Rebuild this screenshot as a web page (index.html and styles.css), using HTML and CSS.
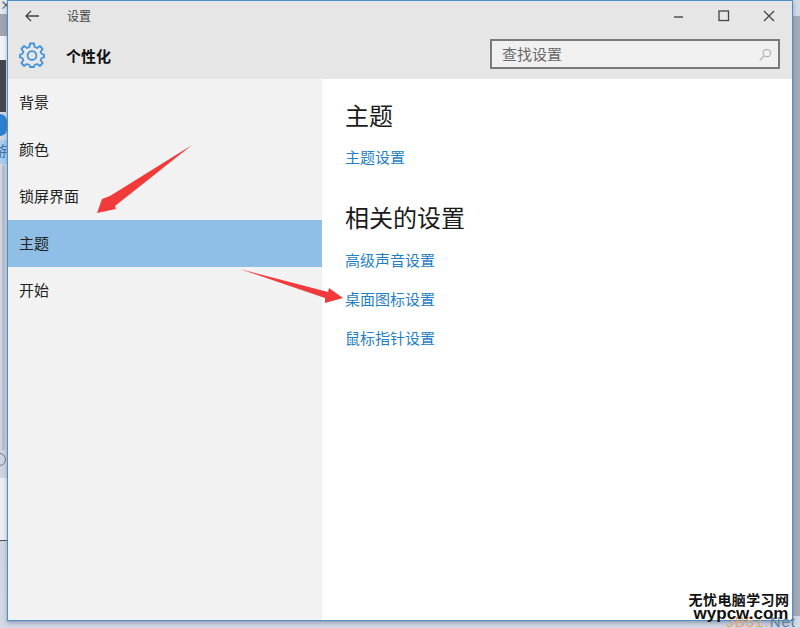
FILE: index.html
```html
<!DOCTYPE html>
<html lang="zh-CN">
<head>
    <meta charset="UTF-8">
    <title>设置</title>
    <link rel="stylesheet" href="styles.css">
</head>
<body>
    <div class="desktop">
        <!-- bits of the desktop showing behind the window -->
        <div class="peek peek-close">×</div>
        <div class="peek peek-bar"></div>
        <div class="peek peek-light"></div>
        <div class="peek peek-dark"></div>
        <div class="peek peek-blue"></div>
        <div class="peek peek-label"><span>游</span></div>
        <div class="peek peek-stripe"></div>
        <div class="peek peek-panel"></div>
        <div class="peek peek-ring"></div>
        <div class="peek peek-line"></div>
        <div class="peek peek-right"></div>

        <div class="window">
            <div class="titlebar">
                <svg class="back-icon" width="14" height="12" viewBox="0 0 14 12">
                    <path d="M6 1 L1 6 L6 11 M1 6 H14" fill="none" stroke="#444" stroke-width="1.3"/>
                </svg>
                <span class="title">设置</span>
                <div class="window-btns">
                    <svg width="12" height="12" viewBox="0 0 12 12"><path d="M1 7 H10" stroke="#444" stroke-width="1.4"/></svg>
                    <svg width="12" height="12" viewBox="0 0 12 12"><rect x="1" y="1" width="9.5" height="9.5" fill="none" stroke="#444" stroke-width="1.3"/></svg>
                    <svg width="12" height="12" viewBox="0 0 12 12"><path d="M1 1 L11 11 M11 1 L1 11" stroke="#444" stroke-width="1.3"/></svg>
                </div>
            </div>
            <div class="header">
                <svg class="gear-icon" width="26" height="26" viewBox="0 0 26 26">
                    <path d="M11 1.5 H15 L15.6 5 L18 6 L20.9 4 L23.7 6.8 L21.7 9.7 L22.7 12 L25 12.6 V15.4 L22.7 16 L21.7 18.3 L23.7 21.2 L20.9 24 L18 22 L15.6 23 L15 25 H11 L10.4 23 L8 22 L5.1 24 L2.3 21.2 L4.3 18.3 L3.3 16 L1 15.4 V12.6 L3.3 12 L4.3 9.7 L2.3 6.8 L5.1 4 L8 6 L10.4 5 Z" fill="none" stroke="#4294d8" stroke-width="1.8" stroke-linejoin="round"/>
                    <circle cx="13" cy="13.5" r="4.4" fill="none" stroke="#4294d8" stroke-width="1.8"/>
                </svg>
                <span class="section-name">个性化</span>
                <div class="search">
                    <span class="search-text">查找设置</span>
                    <svg width="13" height="13" viewBox="0 0 14 14">
                        <circle cx="8.5" cy="5.5" r="4" fill="none" stroke="#aaa" stroke-width="1.1"/>
                        <path d="M5.5 8.5 L1 13" stroke="#aaa" stroke-width="1.2"/>
                    </svg>
                </div>
            </div>
            <div class="main">
                <div class="sidebar">
                    <div class="nav-item">背景</div>
                    <div class="nav-item">颜色</div>
                    <div class="nav-item">锁屏界面</div>
                    <div class="nav-item active">主题</div>
                    <div class="nav-item">开始</div>
                </div>
                <div class="content">
                    <h2 class="first">主题</h2>
                    <a class="link">主题设置</a>
                    <h2 class="second">相关的设置</h2>
                    <a class="link">高级声音设置</a>
                    <a class="link">桌面图标设置</a>
                    <a class="link">鼠标指针设置</a>
                </div>
            </div>
        </div>

        <!-- red annotation arrows -->
        <svg class="arrows" width="800" height="628" viewBox="0 0 800 628">
            <polygon points="192,145 110,196 102,199 97,213 116,209 115,206" fill="#f23a3a"/>
            <polygon points="240,269 328,292 329,288 343,298 325,303 325,298" fill="#f23a3a"/>
        </svg>

        <div class="watermark">
            <div class="wm-back">JB51.<span>Net</span></div>
            <div class="wm-cn">无忧电脑学习网</div>
            <div class="wm-en">wypcw.com</div>
        </div>
    </div>
</body>
</html>
```

FILE: styles.css
```css
html, body {
    margin: 0;
    padding: 0;
}
body {
    width: 800px;
    height: 628px;
    overflow: hidden;
    font-family: "Noto Sans CJK SC", "Liberation Sans", sans-serif;
}
.desktop {
    position: relative;
    width: 800px;
    height: 628px;
    background: linear-gradient(#d4d9e4, #cdd3e0 70%, #d3d9e6);
    padding: 0 0 0 7px;
    box-sizing: border-box;
    overflow: hidden;
}
.peek {
    position: absolute;
}
.peek-close {
    left: 0;
    top: 0;
    width: 7px;
    height: 14px;
    overflow: hidden;
    font-size: 12px;
    line-height: 10px;
    color: #444;
    background: #e4e8f0;
}
.peek-bar {
    left: 0;
    top: 14px;
    width: 7px;
    height: 22px;
    background: #a3a5b3;
}
.peek-light {
    left: 0;
    top: 36px;
    width: 7px;
    height: 24px;
    background: #f2f3f6;
}
.peek-dark {
    left: 0;
    top: 60px;
    width: 6px;
    height: 52px;
    background: #45454f;
}
.peek-blue {
    left: 0;
    top: 114px;
    width: 7px;
    height: 22px;
    border-radius: 0 10px 10px 0;
    background: #2f7fd0;
}
.peek-label {
    left: 0;
    top: 140px;
    width: 7px;
    height: 24px;
    overflow: hidden;
    background: #a9cdf0;
    font-size: 14px;
    line-height: 20px;
    color: #3a6ea5;
}
.peek-label span {
    display: block;
    margin-left: -7px;
}
.peek-stripe {
    left: 2px;
    top: 165px;
    width: 3px;
    height: 285px;
    background: #b9bfc9;
}
.peek-panel {
    left: 0;
    top: 478px;
    width: 7px;
    height: 62px;
    background: #eceef2;
}
.peek-ring {
    left: -7px;
    top: 453px;
    width: 11px;
    height: 11px;
    border: 1.5px solid #777;
    border-radius: 50%;
}
.peek-line {
    left: 0;
    top: 540px;
    width: 7px;
    height: 1px;
    background: #555;
}
.peek-right {
    left: 793px;
    top: 16px;
    width: 7px;
    height: 600px;
    background: #a4a9b6;
}
.window {
    width: 786px;
    height: 621px;
    box-sizing: border-box;
    border: 1px solid #4f8fc8;
    background: #fff;
    display: flex;
    flex-direction: column;
    box-shadow: 0 2px 4px rgba(80, 100, 130, 0.5);
    position: relative;
}
.titlebar {
    height: 30px;
    flex-shrink: 0;
    background: #e6e6e6;
    display: flex;
    align-items: center;
    padding-left: 17px;
}
.back-icon {
    margin-right: 28px;
}
.title {
    font-size: 12px;
    color: #444;
    margin-bottom: 2px;
}
.window-btns {
    margin-left: auto;
    display: flex;
    gap: 33px;
    padding-right: 17px;
}
.header {
    height: 48px;
    flex-shrink: 0;
    background: #e6e6e6;
    display: flex;
    align-items: center;
    padding: 0 12px 0 11px;
}
.gear-icon {
    margin-right: 21px;
}
.section-name {
    font-size: 15px;
    font-weight: 700;
    color: #111;
}
.search {
    margin-left: auto;
    margin-bottom: 2px;
    width: 290px;
    height: 30px;
    box-sizing: border-box;
    border: 2px solid #7a7a7a;
    background: #f0f0f0;
    display: flex;
    align-items: center;
    justify-content: space-between;
    padding: 0 6px 0 10px;
}
.search-text {
    font-size: 15px;
    color: #6a6a6a;
    margin-bottom: 1px;
}
.main {
    flex: 1;
    display: flex;
}
.sidebar {
    width: 314px;
    flex-shrink: 0;
    background: #f2f2f2;
}
.nav-item {
    height: 47px;
    line-height: 45px;
    padding-left: 11px;
    font-size: 15px;
    color: #222;
}
.nav-item.active {
    background: #8fbfe6;
}
.content {
    padding-left: 23px;
    display: flex;
    flex-direction: column;
    align-items: flex-start;
}
.content h2 {
    font-size: 24px;
    font-weight: 400;
    line-height: 32px;
    color: #1a1a1a;
    margin: 0;
}
.content h2.first {
    margin-top: 20px;
    margin-bottom: 16px;
}
.content h2.second {
    margin-top: 15px;
    margin-bottom: 17px;
}
.link {
    font-size: 15px;
    line-height: 20px;
    color: #1f80c5;
    margin-bottom: 19px;
}
.watermark {
    position: absolute;
    right: 8px;
    top: 591px;
    width: 106px;
    text-align: center;
}
.wm-cn {
    font-size: 14px;
    font-weight: 700;
    line-height: 17px;
    color: #111;
    letter-spacing: 0.4px;
    white-space: nowrap;
}
.wm-en {
    font-family: "Liberation Sans", sans-serif;
    font-size: 17px;
    font-weight: 700;
    line-height: 11px;
    color: #111;
    position: relative;
    left: 2px;
}
.wm-back {
    position: absolute;
    right: -4px;
    top: 24px;
    font-family: "Liberation Sans", sans-serif;
    font-size: 15px;
    line-height: 14px;
    letter-spacing: 1px;
    color: #e8a36a;
    white-space: nowrap;
}
.wm-back span {
    color: #5c7f9c;
}
.arrows {
    position: absolute;
    left: 0;
    top: 0;
    pointer-events: none;
}
```
